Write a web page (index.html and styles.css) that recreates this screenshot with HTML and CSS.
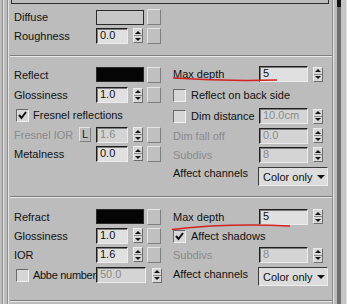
FILE: index.html
```html
<!DOCTYPE html>
<html>
<head>
    <title>Material Parameters</title>
    <link rel="stylesheet" href="styles.css">
</head>
<body>
    <div class="panel">
        <div class="edge"></div>

        <div class="content">
            <!-- diffuse / roughness -->
            <div class="sec sec-top">
                <div class="topbox"></div>
                <div class="col col-l rows-top">
                    <div class="row">
                        <span class="lbl">Diffuse</span>
                        <span class="swatch"></span>
                        <span class="map"></span>
                    </div>
                    <div class="row">
                        <span class="lbl">Roughness</span>
                        <span class="num">0.0</span>
                        <span class="spin"><span class="up"></span><span class="dn"></span></span>
                        <span class="map"></span>
                    </div>
                </div>
            </div>
            <div class="sep"></div>

            <!-- reflection -->
            <div class="sec sec-reflect">
                <div class="col col-l rows-reflect-l">
                    <div class="row">
                        <span class="lbl">Reflect</span>
                        <span class="swatch black"></span>
                        <span class="map"></span>
                    </div>
                    <div class="row">
                        <span class="lbl">Glossiness</span>
                        <span class="num">1.0</span>
                        <span class="spin"><span class="up"></span><span class="dn"></span></span>
                        <span class="map"></span>
                    </div>
                    <div class="row">
                        <span class="chk checked"><svg width="11" height="11" viewBox="0 0 11 11"><path d="M2 5 L4.5 8 L9 2" fill="none" stroke="#111" stroke-width="2"/></svg></span>
                        <span class="chk-text">Fresnel reflections</span>
                    </div>
                    <div class="row">
                        <span class="lbl short off">Fresnel IOR</span>
                        <span class="btn-l">L</span>
                        <span class="num off">1.6</span>
                        <span class="spin"><span class="up"></span><span class="dn"></span></span>
                        <span class="map"></span>
                    </div>
                    <div class="row">
                        <span class="lbl">Metalness</span>
                        <span class="num">0.0</span>
                        <span class="spin"><span class="up"></span><span class="dn"></span></span>
                        <span class="map"></span>
                    </div>
                </div>

                <div class="col col-r rows-reflect-r">
                    <div class="row">
                        <span class="lbl">Max depth</span>
                        <span class="num wide">5</span>
                        <span class="spin"><span class="up"></span><span class="dn"></span></span>
                    </div>
                    <div class="row">
                        <span class="chk"></span>
                        <span class="chk-text">Reflect on back side</span>
                    </div>
                    <div class="row">
                        <span class="chk"></span>
                        <span class="chk-text dim-lbl">Dim distance</span>
                        <span class="num wide off">10.0cm</span>
                        <span class="spin"><span class="up"></span><span class="dn"></span></span>
                    </div>
                    <div class="row">
                        <span class="lbl off">Dim fall off</span>
                        <span class="num wide off">0.0</span>
                        <span class="spin"><span class="up"></span><span class="dn"></span></span>
                    </div>
                    <div class="row">
                        <span class="lbl off">Subdivs</span>
                        <span class="num wide off">8</span>
                        <span class="spin"><span class="up"></span><span class="dn"></span></span>
                    </div>
                    <div class="row row-dd">
                        <span class="lbl">Affect channels</span>
                        <span class="dd">Color only<i class="arrow"></i></span>
                    </div>
                </div>
            </div>
            <div class="sep"></div>

            <!-- refraction -->
            <div class="sec sec-refract">
                <div class="col col-l rows-refract-l">
                    <div class="row">
                        <span class="lbl">Refract</span>
                        <span class="swatch black"></span>
                        <span class="map"></span>
                    </div>
                    <div class="row">
                        <span class="lbl">Glossiness</span>
                        <span class="num">1.0</span>
                        <span class="spin"><span class="up"></span><span class="dn"></span></span>
                        <span class="map"></span>
                    </div>
                    <div class="row">
                        <span class="lbl">IOR</span>
                        <span class="num">1.6</span>
                        <span class="spin"><span class="up"></span><span class="dn"></span></span>
                        <span class="map"></span>
                    </div>
                    <div class="row">
                        <span class="chk"></span>
                        <span class="chk-text abbe">Abbe number</span>
                        <span class="num abbe-num off">50.0</span>
                        <span class="spin abbe-spin"><span class="up"></span><span class="dn"></span></span>
                    </div>
                </div>

                <div class="col col-r rows-refract-r">
                    <div class="row">
                        <span class="lbl">Max depth</span>
                        <span class="num wide">5</span>
                        <span class="spin"><span class="up"></span><span class="dn"></span></span>
                    </div>
                    <div class="row">
                        <span class="chk checked"><svg width="11" height="11" viewBox="0 0 11 11"><path d="M2 5 L4.5 8 L9 2" fill="none" stroke="#111" stroke-width="2"/></svg></span>
                        <span class="chk-text">Affect shadows</span>
                    </div>
                    <div class="row">
                        <span class="lbl off">Subdivs</span>
                        <span class="num wide off">8</span>
                        <span class="spin"><span class="up"></span><span class="dn"></span></span>
                    </div>
                    <div class="row row-dd">
                        <span class="lbl">Affect channels</span>
                        <span class="dd">Color only<i class="arrow"></i></span>
                    </div>
                </div>
            </div>
            <div class="sep"></div>
        </div>

        <div class="scroll"><div class="thumb"></div></div>

        <!-- hand drawn marks over the max depth fields -->
        <svg class="marks" width="347" height="304" viewBox="0 0 347 304">
            <path d="M173 78 Q 225 81.5 277 80" fill="none" stroke="#d42222" stroke-width="1.6"/>
            <path d="M172 229.5 Q 228 223 290 226" fill="none" stroke="#d42222" stroke-width="1.6"/>
        </svg>
    </div>
</body>
</html>
```

FILE: styles.css
```css
body {
    margin: 0;
    background-color: #bcbcbc;
    font-family: "Liberation Sans", Arial, sans-serif;
    font-size: 11px;
    color: #111;
}
.panel {
    position: relative;
    display: grid;
    grid-template-columns: 10px 322px 15px;
    width: 347px;
    height: 304px;
    overflow: hidden;
}
.edge {
    background: linear-gradient(to right,
        transparent 2px, #8e8e8e 2px 3px, #e2e2e2 3px 4px,
        transparent 4px 7px, #8e8e8e 7px 8px, #e2e2e2 8px 9px, transparent 9px);
}
.scroll {
    background: linear-gradient(to right,
        #8e8e8e 0 1px, #e2e2e2 1px 2px, transparent 2px 5px,
        #6e6e6e 5px 9px, #c6c6c6 9px 14px, #e0e0e0 14px);
}
.thumb {
    margin-left: 5px;
    width: 4px;
    height: 7px;
    background-color: #111;
}
.marks {
    position: absolute;
    left: 0;
    top: 0;
    pointer-events: none;
}

/* sections */
.sec {
    display: flex;
    box-sizing: border-box;
}
.sec-top {
    flex-direction: column;
    height: 55px;
}
.topbox {
    margin-left: 1px;
    width: 318px;
    height: 4px;
    box-sizing: border-box;
    border: 1px solid #2e2e2e;
    border-top: none;
}
.sec-reflect {
    height: 139px;
    padding-top: 7px;
}
.sec-refract {
    height: 102px;
    padding-top: 9px;
}
.sep {
    height: 2px;
    box-sizing: border-box;
    border-top: 1px solid #7c7c7c;
    border-bottom: 1px solid #e8e8e8;
}

/* columns */
.col {
    display: grid;
    align-content: start;
}
.col-l {
    margin-left: 4px;
    width: 147px;
}
.col-r {
    margin-left: 12px;
    width: 156px;
}
.rows-top { margin-top: 4px; grid-template-rows: 18px 19px; }
.rows-reflect-l { grid-template-rows: 21px 20px 20px 19px 19px; }
.rows-reflect-r { grid-template-rows: 20px 22px 20px 19px 19px 24px; }
.rows-refract-l { grid-template-rows: 19px 19px 19px 22px; }
.rows-refract-r { grid-template-rows: 19px 20px 18px 25px; }

.row {
    display: flex;
    align-items: center;
    white-space: nowrap;
}
.lbl {
    width: 82px;
    flex: none;
}
.col-r .lbl {
    width: 86px;
}
.lbl.short {
    width: 65px;
}
.off {
    color: #8a8a8a;
}

/* controls */
.swatch {
    width: 48px;
    height: 15px;
    box-sizing: border-box;
    border: 1px solid #2a2a2a;
    background-color: #c6c6c6;
}
.swatch.black {
    background-color: #050505;
}
.map {
    width: 14px;
    height: 16px;
    margin-left: 3px;
    box-sizing: border-box;
    border: 1px solid;
    border-color: #e4e4e4 #7e7e7e #7e7e7e #e4e4e4;
    background-color: #c0c0c0;
}
.spin + .map {
    margin-left: 4px;
}
.num {
    width: 32px;
    height: 16px;
    box-sizing: border-box;
    padding-left: 3px;
    line-height: 13px;
    border: 1px solid;
    border-color: #1e1e1e #ececec #ececec #1e1e1e;
    box-shadow: inset 1px 1px 0 #7a7a7a;
    background-color: #e0e0e0;
    flex: none;
}
.num.off {
    background-color: #d4d4d4;
}
.num.wide {
    width: 49px;
}
.spin {
    display: flex;
    flex-direction: column;
    width: 10px;
    height: 15px;
    margin-left: 5px;
    box-sizing: border-box;
    border: 1px solid;
    border-color: #ececec #6e6e6e #6e6e6e #ececec;
    background-color: #d6d6d6;
    flex: none;
}
.spin span {
    flex: 1;
    display: flex;
    align-items: center;
    justify-content: center;
}
.spin span + span {
    border-top: 1px solid #8a8a8a;
}
.spin .up::before {
    content: "";
    border-left: 3px solid transparent;
    border-right: 3px solid transparent;
    border-bottom: 3px solid #111;
}
.spin .dn::before {
    content: "";
    border-left: 3px solid transparent;
    border-right: 3px solid transparent;
    border-top: 3px solid #111;
}
.chk {
    display: flex;
    align-items: center;
    justify-content: center;
    width: 13px;
    height: 13px;
    box-sizing: border-box;
    border: 1px solid;
    border-color: #6a6a6a #f0f0f0 #f0f0f0 #6a6a6a;
    background-color: #d6d6d6;
    flex: none;
}
.col-l .chk {
    margin-left: 2px;
}
.chk-text {
    margin-left: 4px;
}
.col-r .chk-text {
    margin-left: 5px;
}
.dim-lbl {
    width: 68px;
}
.abbe {
    flex: none;
    width: 63px;
    min-width: 0;
    letter-spacing: -0.3px;
}
.num.abbe-num {
    width: 50px;
}
.spin.abbe-spin {
    margin-left: 6px;
}
.btn-l {
    width: 12px;
    height: 15px;
    margin-right: 5px;
    box-sizing: border-box;
    border: 1px solid;
    border-color: #e4e4e4 #7e7e7e #7e7e7e #e4e4e4;
    text-align: center;
    line-height: 13px;
    color: #222;
}
.row-dd .lbl {
    width: 85px;
    margin-bottom: 6px;
}
.dd {
    display: flex;
    align-items: center;
    justify-content: space-between;
    width: 70px;
    height: 19px;
    box-sizing: border-box;
    padding: 1px 2px 0 4px;
    border: 1px solid;
    border-color: #3a3a3a #ececec #ececec #3a3a3a;
    background-color: #dcdcdc;
}
.arrow {
    border-left: 4px solid transparent;
    border-right: 4px solid transparent;
    border-top: 4px solid #111;
}
```
